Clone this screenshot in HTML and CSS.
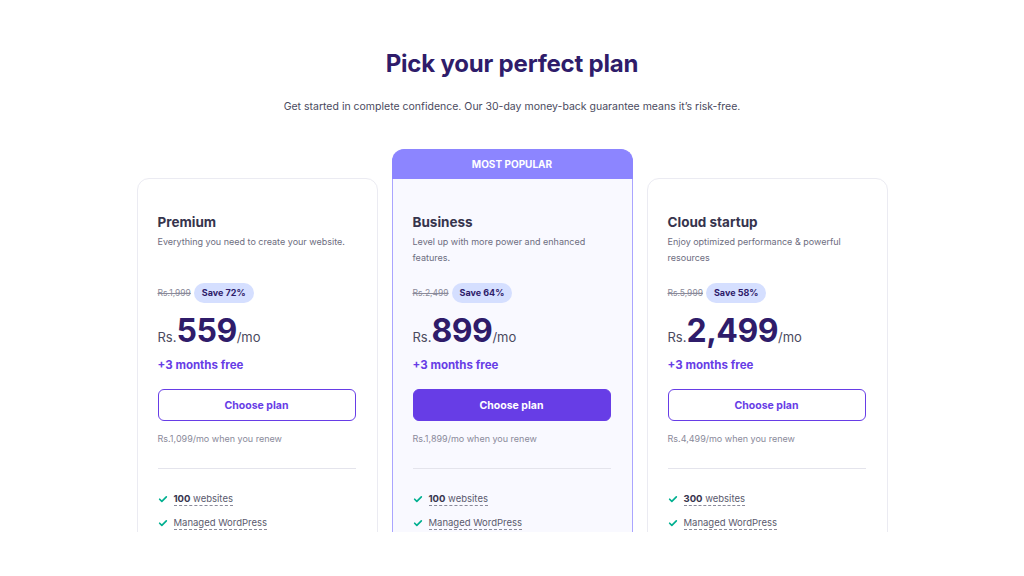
FILE: index.html
```html
<!DOCTYPE html>
<html lang="en">
<head>
  <meta charset="UTF-8" />
  <meta name="viewport" content="width=device-width, initial-scale=1.0" />
  <title>Pick your perfect plan</title>
  <link rel="stylesheet" href="styles.css">
</head>
<body>
  <section class="pricing">
    <h1>Pick your perfect plan</h1>
    <p class="lead">Get started in complete confidence. Our 30-day money-back guarantee means it’s risk-free.</p>

    <div class="plans">
      <div class="plan">
        <div class="card">
          <h2>Premium</h2>
          <p class="desc">Everything you need to create your website.</p>
          <div class="discount">
            <span class="old">Rs.1,999</span>
            <span class="save">Save 72%</span>
          </div>
          <div class="price"><span class="cur">Rs.</span><span class="amount">559</span><span class="per">/mo</span></div>
          <div class="free">+3 months free</div>
          <button class="choose">Choose plan</button>
          <div class="renew">Rs.1,099/mo when you renew</div>
          <hr>
          <ul class="features">
            <li><svg viewBox="0 0 12 12"><path d="M2 6.3l2.6 2.6L10 3.5"/></svg><span><b>100</b> websites</span></li>
            <li><svg viewBox="0 0 12 12"><path d="M2 6.3l2.6 2.6L10 3.5"/></svg><span>Managed WordPress</span></li>
          </ul>
        </div>
      </div>

      <div class="plan popular">
        <div class="badge">MOST POPULAR</div>
        <div class="card">
          <h2>Business</h2>
          <p class="desc">Level up with more power and enhanced features.</p>
          <div class="discount">
            <span class="old">Rs.2,499</span>
            <span class="save">Save 64%</span>
          </div>
          <div class="price"><span class="cur">Rs.</span><span class="amount">899</span><span class="per">/mo</span></div>
          <div class="free">+3 months free</div>
          <button class="choose">Choose plan</button>
          <div class="renew">Rs.1,899/mo when you renew</div>
          <hr>
          <ul class="features">
            <li><svg viewBox="0 0 12 12"><path d="M2 6.3l2.6 2.6L10 3.5"/></svg><span><b>100</b> websites</span></li>
            <li><svg viewBox="0 0 12 12"><path d="M2 6.3l2.6 2.6L10 3.5"/></svg><span>Managed WordPress</span></li>
          </ul>
        </div>
      </div>

      <div class="plan">
        <div class="card">
          <h2>Cloud startup</h2>
          <p class="desc">Enjoy optimized performance &amp; powerful resources</p>
          <div class="discount">
            <span class="old">Rs.5,999</span>
            <span class="save">Save 58%</span>
          </div>
          <div class="price"><span class="cur">Rs.</span><span class="amount">2,499</span><span class="per">/mo</span></div>
          <div class="free">+3 months free</div>
          <button class="choose">Choose plan</button>
          <div class="renew">Rs.4,499/mo when you renew</div>
          <hr>
          <ul class="features">
            <li><svg viewBox="0 0 12 12"><path d="M2 6.3l2.6 2.6L10 3.5"/></svg><span><b>300</b> websites</span></li>
            <li><svg viewBox="0 0 12 12"><path d="M2 6.3l2.6 2.6L10 3.5"/></svg><span>Managed WordPress</span></li>
          </ul>
        </div>
      </div>
    </div>
  </section>
</body>
</html>
```

FILE: styles.css
```css
body {
  margin: 0;
  font-family: "Inter", "Open Sans", sans-serif;
  background-color: #ffffff;
  color: #36344d;
}
.pricing {
  height: 532px;
  overflow: hidden;
  padding-top: 48px;
  box-sizing: border-box;
  text-align: center;
}
h1 {
  margin: 0;
  font-size: 24px;
  line-height: 32px;
  font-weight: 700;
  color: #2f1c6a;
  letter-spacing: -0.2px;
}
.lead {
  margin: 19px 0 0;
  font-size: 10.5px;
  line-height: 16px;
  color: #4a4a5e;
}
.plans {
  display: flex;
  justify-content: center;
  gap: 14px;
  margin-top: 34px;
}
.plan {
  width: 241px;
  display: flex;
  flex-direction: column;
  padding-top: 29px;
}
.plan.popular {
  padding-top: 0;
}
.badge {
  height: 29px;
  line-height: 29px;
  background: #8c85ff;
  color: #fff;
  font-size: 10px;
  font-weight: 700;
  border-radius: 12px 12px 0 0;
  border: 1px solid #8c85ff;
  border-bottom: none;
}
.card {
  text-align: left;
  border: 1px solid #ebebf2;
  border-radius: 12px;
  padding: 34px 21px 0 20px;
  height: 400px;
  background: #fff;
}
.popular .card {
  border-color: #aaa5ff;
  border-top: none;
  border-radius: 0;
  background: #f9f9ff;
}
h2 {
  margin: 0;
  font-size: 13.5px;
  line-height: 18px;
  font-weight: 700;
  color: #36344d;
}
.desc {
  margin: 3px 0 0;
  font-size: 9px;
  line-height: 16px;
  color: #6d6d80;
  height: 32px;
}
.discount {
  display: flex;
  align-items: center;
  gap: 3px;
  margin-top: 17px;
}
.old {
  font-size: 8.5px;
  color: #8a8a9a;
  text-decoration: line-through;
}
.save {
  background: #d5dfff;
  color: #2f1c6a;
  font-size: 9px;
  font-weight: 700;
  padding: 0 8px;
  height: 20px;
  line-height: 20px;
  border-radius: 10px;
}
.price {
  margin-top: 10px;
  color: #2f1c6a;
  display: flex;
  align-items: baseline;
  height: 36px;
}
.cur, .per {
  font-size: 13px;
  color: #4a4a5e;
}
.amount {
  font-size: 32px;
  font-weight: 700;
  letter-spacing: -0.5px;
  line-height: 36px;
}
.free {
  margin-top: 9px;
  font-size: 11.5px;
  font-weight: 700;
  color: #673de6;
}
.choose {
  display: block;
  width: 100%;
  height: 32px;
  margin-top: 17px;
  border: 1.5px solid #673de6;
  border-radius: 6px;
  background: #fff;
  color: #673de6;
  font-family: inherit;
  font-size: 10.5px;
  font-weight: 700;
  cursor: pointer;
}
.popular .choose {
  background: #673de6;
  color: #fff;
}
.renew {
  margin-top: 12px;
  font-size: 9px;
  color: #8a8a9a;
}
hr {
  border: none;
  border-top: 1px solid #e4e4ec;
  margin: 24px 0 0;
}
.features {
  list-style: none;
  margin: 18px 0 0;
  padding: 0;
}
.features li {
  display: flex;
  align-items: center;
  gap: 6px;
  height: 24px;
  font-size: 9.5px;
  color: #5a5a6e;
}
.features svg {
  width: 10px;
  height: 10px;
  fill: none;
  stroke: #00b090;
  stroke-width: 2;
  stroke-linecap: round;
  stroke-linejoin: round;
}
.features span {
  border-bottom: 1px dashed #8a8a9a;
  line-height: 12px;
}
.features b {
  color: #36344d;
}
```
